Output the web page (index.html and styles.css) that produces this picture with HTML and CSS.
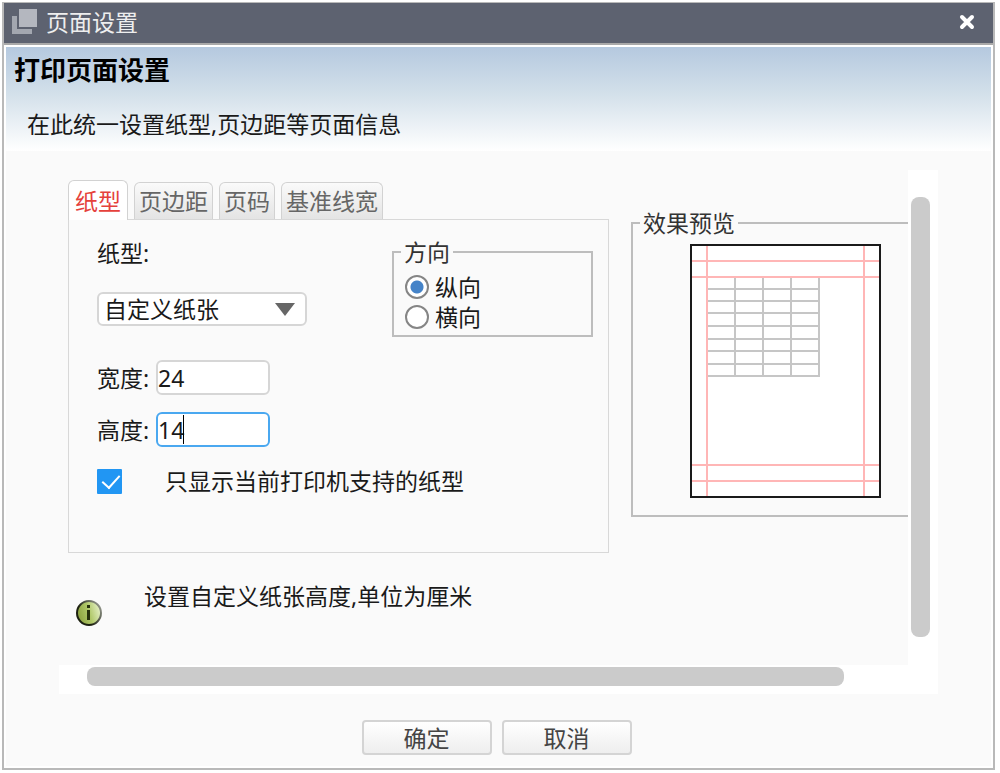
FILE: index.html
```html
<!DOCTYPE html>
<html lang="zh-CN">
<head>
    <meta charset="UTF-8">
    <meta name="viewport" content="width=device-width, initial-scale=1.0">
    <title>页面设置</title>
    <link rel="stylesheet" href="styles.css">
</head>
<body>
    <div class="dialog" role="dialog" aria-labelledby="dialog-title">
        <div class="title-bar">
            <svg class="title-icon" width="26" height="26" viewBox="0 0 26 26" aria-hidden="true">
                <path d="M0 7h5v13h15v5H0z" fill="#a3a7b0"/>
                <rect x="7" y="0" width="18" height="18" fill="#b4b7bf"/>
            </svg>
            <span id="dialog-title">页面设置</span>
            <button class="close-btn" aria-label="关闭">
                <svg width="16" height="16" viewBox="0 0 16 16">
                    <path d="M3 3L13 13M13 3L3 13" stroke="#fff" stroke-width="4" stroke-linecap="round"/>
                </svg>
            </button>
        </div>

        <div class="dialog-body">
            <div class="banner">
                <h1>打印页面设置</h1>
                <p>在此统一设置纸型,页边距等页面信息</p>
            </div>

            <div class="scroll-area">
                <div class="viewport">
                    <div class="settings">
                        <div class="tabs" role="tablist">
                            <button class="tab active" role="tab" aria-selected="true">纸型</button>
                            <button class="tab" role="tab">页边距</button>
                            <button class="tab" role="tab">页码</button>
                            <button class="tab" role="tab">基准线宽</button>
                        </div>

                        <div class="panel">
                            <div class="panel-top">
                                <div class="paper-type">
                                    <label for="paper">纸型:</label>
                                    <div class="select-box">
                                        <select id="paper">
                                            <option>自定义纸张</option>
                                        </select>
                                        <svg class="arrow" width="20" height="13" viewBox="0 0 20 13" aria-hidden="true">
                                            <path d="M0 0h20L10 13z" fill="#666"/>
                                        </svg>
                                    </div>
                                </div>
                                <fieldset class="direction">
                                    <legend>方向</legend>
                                    <label><input type="radio" name="direction" checked>纵向</label>
                                    <label><input type="radio" name="direction">横向</label>
                                </fieldset>
                            </div>
                            <div class="field">
                                <label for="paper-width">宽度:</label>
                                <input id="paper-width" type="text" value="24">
                            </div>
                            <div class="field focused">
                                <label for="paper-height">高度:</label>
                                <input id="paper-height" type="text" value="14">
                                <span class="caret"></span>
                            </div>
                            <label class="check-row">
                                <input type="checkbox" checked>只显示当前打印机支持的纸型
                            </label>
                        </div>

                        <div class="hint">
                            <svg class="info-icon" width="28" height="28" viewBox="0 0 28 28" aria-hidden="true">
                                <defs>
                                    <linearGradient id="green" x1="0" y1="0.6" x2="1" y2="0.3">
                                        <stop offset="0" stop-color="#8aa03c"/>
                                        <stop offset="0.5" stop-color="#b0c86a"/>
                                        <stop offset="1" stop-color="#e8f3cc"/>
                                    </linearGradient>
                                    <linearGradient id="rim" x1="0" y1="1" x2="1" y2="0.3">
                                        <stop offset="0.4" stop-color="#1c2010"/>
                                        <stop offset="1" stop-color="#8c9084"/>
                                    </linearGradient>
                                </defs>
                                <circle cx="14" cy="14" r="12" fill="url(#green)" stroke="url(#rim)" stroke-width="2"/>
                                <rect x="12" y="6" width="3" height="3" fill="#26300c"/>
                                <rect x="12" y="11" width="3" height="10" fill="#26300c"/>
                            </svg>
                            <p>设置自定义纸张高度,单位为厘米</p>
                        </div>
                    </div>

                    <fieldset class="preview">
                        <legend>效果预览</legend>
                        <svg width="191" height="254" viewBox="0 0 191 254">
                            <rect x="1" y="1" width="189" height="252" fill="#fff"/>
                            <!-- 表格 -->
                            <path d="M45 33V133M73 33V133M101 33V133M129 33V133M17 45H130M17 57H130M17 69H130M17 82H130M17 95H130M17 107H130M17 120H130M17 132H130" stroke="#c6c6c6" stroke-width="2"/>
                            <!-- 页边距线 -->
                            <path d="M17 1V253M174 1V253M1 17H190M1 33H190M1 221H190M1 237H190" stroke="#ffb6b6" stroke-width="2"/>
                            <rect x="1" y="1" width="189" height="252" fill="none" stroke="#1a1a1a" stroke-width="2"/>
                        </svg>
                    </fieldset>
                </div>
                <div class="bar-v"><div class="thumb"></div></div>
                <div class="bar-h"><div class="thumb"></div></div>
            </div>

            <div class="buttons">
                <button class="btn">确定</button>
                <button class="btn">取消</button>
            </div>
        </div>
    </div>
</body>
</html>
```
FILE: styles.css
```css
* {
    box-sizing: border-box;
}

body {
    margin: 0;
    padding: 2px 5px 3px 2px;
    min-height: 100vh;
    display: flex;
    background-color: #fff;
}

body,
button,
input,
select {
    font-family: "Noto Sans", "Noto Sans CJK SC", sans-serif;
    font-size: 23px;
    line-height: 30px;
    color: #1a1a1a;
}

h1,
p {
    margin: 0;
}

input:focus,
select:focus,
button:focus {
    outline: none;
}

.dialog {
    flex: 1;
    min-width: 0;
    display: flex;
    flex-direction: column;
    border: 2px solid #b9b9b9;
    border-top-width: 1px;
}

/* 标题栏 */
.title-bar {
    display: flex;
    align-items: center;
    height: 42px;
    padding: 0 18px 2px 8px;
    background-color: #5d6270;
    border-bottom: 2px solid #a9a9a9;
    color: #eee;
}

.title-icon {
    margin-right: 8px;
}

.close-btn {
    display: flex;
    margin-left: auto;
    padding: 0;
    border: none;
    background: none;
    cursor: pointer;
}

.dialog-body {
    flex: 1;
    display: flex;
    flex-direction: column;
    margin: 2px;
    background-color: #fafafa;
}

.banner {
    height: 104px;
    padding: 8px;
    background: linear-gradient(#b5c9df, #d3e0ea 45%, #fff);
}

.banner h1 {
    font-size: 26px;
    line-height: 30px;
    color: #000;
}

.banner p {
    margin: 24px 0 0 13px;
}

/* 滚动区域 */
.scroll-area {
    flex: 1;
    display: grid;
    grid-template-columns: minmax(0, 1fr) 30px;
    grid-template-rows: 1fr 29px;
    margin: 19px 53px 0;
}

.viewport {
    display: flex;
    align-items: flex-start;
    padding: 10px 0 0 9px;
    overflow: hidden;
}

.bar-v {
    padding: 27px 8px 28px 3px;
    background-color: #fff;
}

.bar-h {
    grid-column: 1 / 3;
    padding: 2px 94px 8px 28px;
    background-color: #fff;
}

.thumb {
    height: 100%;
    border-radius: 8px;
    background-color: #cbcbcb;
}

.settings {
    flex: none;
    width: 541px;
}

/* 选项卡 */
.tabs {
    display: flex;
    align-items: flex-end;
    gap: 6px;
    height: 39px;
}

.tab {
    height: 37px;
    padding: 0 4px;
    border: 1px solid #d2d2d2;
    border-bottom: none;
    border-radius: 6px 6px 0 0;
    background: linear-gradient(#fafafa, #e4e4e4);
    color: #666;
    cursor: pointer;
}

.tab.active {
    position: relative;
    height: 40px;
    margin-bottom: -1px;
    padding: 0 6px;
    background: #fff;
    color: #e5413c;
}

.panel {
    padding: 18px 15px 56px 28px;
    border: 1px solid #d8d8d8;
}

.panel-top {
    display: flex;
    align-items: flex-start;
    justify-content: space-between;
}

.paper-type {
    width: 210px;
}

.paper-type label {
    display: block;
    margin-bottom: 24px;
}

.select-box {
    position: relative;
}

.select-box select {
    display: block;
    width: 100%;
    height: 34px;
    padding: 0 5px;
    border: 2px solid #d6d6d6;
    border-radius: 6px;
    background-color: #fff;
    appearance: none;
}

.select-box .arrow {
    position: absolute;
    top: 11px;
    right: 12px;
    pointer-events: none;
}

fieldset {
    margin: 0;
    border: 2px solid #bdbdbd;
}

legend {
    padding: 0 3px;
    line-height: 28px;
    color: #333;
}

.direction {
    width: 201px;
    padding: 6px 12px 3px 7px;
}

.direction label {
    display: flex;
    align-items: center;
    gap: 6px;
    margin-left: 4px;
}

.direction input {
    width: 24px;
    height: 24px;
    margin: 0;
    border: 2px solid #858585;
    border-radius: 50%;
    background-color: #fff;
    appearance: none;
}

.direction input:checked {
    background: radial-gradient(circle, #4583c8 6px, #fff 7px);
}

.field {
    position: relative;
    display: flex;
    align-items: center;
    margin-top: 17px;
}

.panel-top + .field {
    margin-top: 23px;
}

.field label {
    width: 59px;
}

.field input {
    width: 114px;
    height: 35px;
    padding: 0;
    border: 2px solid #d6d6d6;
    border-radius: 6px;
    background-color: #fff;
}

.focused input {
    border-color: #4aa8f0;
}

.caret {
    position: absolute;
    top: 3px;
    left: 86px;
    width: 1px;
    height: 29px;
    background-color: #000;
}

.check-row {
    display: flex;
    align-items: center;
    gap: 43px;
    margin-top: 19px;
}

.check-row input {
    width: 25px;
    height: 25px;
    margin: 0;
    border-radius: 1px;
    background-color: #2196f3;
    appearance: none;
}

/* 对勾 */
.check-row input:checked::before {
    content: "";
    display: block;
    width: 8px;
    height: 15px;
    margin: 2px 0 0 9px;
    border: solid #fff;
    border-width: 0 2px 2px 0;
    transform: rotate(42deg);
}

.hint {
    display: flex;
    align-items: flex-start;
    gap: 41px;
    padding: 28px 0 0 7px;
}

.info-icon {
    margin-top: 18px;
}

/* 效果预览 */
.preview {
    flex: none;
    width: 310px;
    margin: 29px 0 0 22px;
    padding: 7px 0 17px 57px;
}

.preview legend {
    margin-left: -50px;
}

.preview svg {
    display: block;
}

.buttons {
    display: flex;
    justify-content: center;
    gap: 10px;
    padding: 26px 4px 11px 0;
}

.btn {
    width: 130px;
    height: 35px;
    padding: 0;
    border: 2px solid #d4d4d4;
    border-radius: 4px;
    background: linear-gradient(#fff, #eee);
    color: #444;
    cursor: pointer;
}
```
